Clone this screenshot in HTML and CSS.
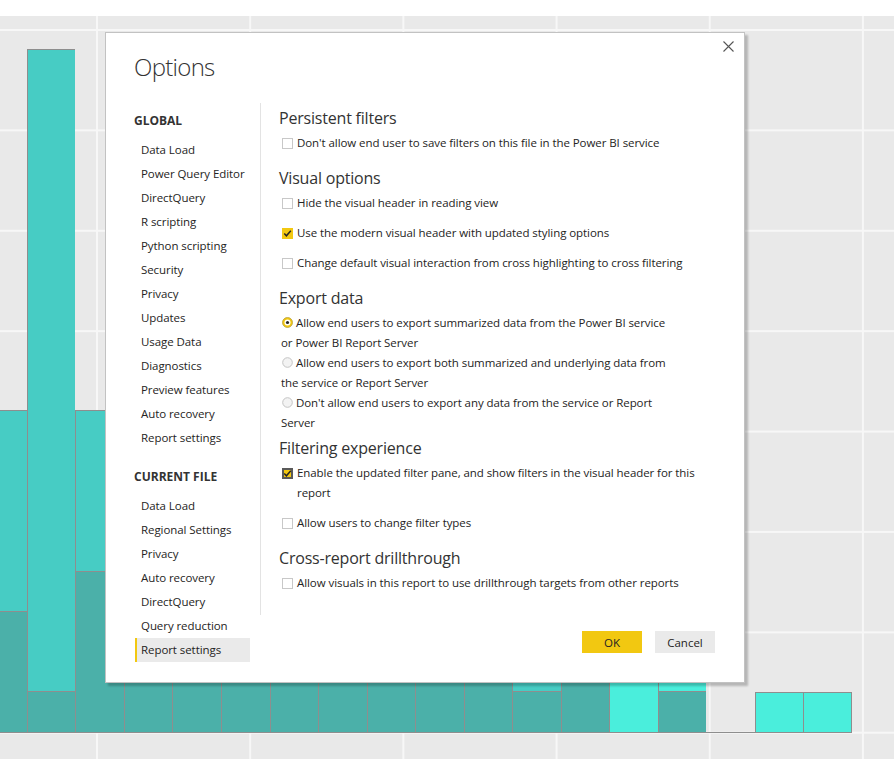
FILE: index.html
```html
<!DOCTYPE html>
<html>
<head>
<meta charset="utf-8">
<link rel="stylesheet" href="styles.css">
</head>
<body>
<div class="top"></div>
<div class="canvas">
  <div class="chart">
    <div class="bar"><div class="seg light" style="height:201px"></div><div class="seg dark" style="height:121px"></div></div>
    <div class="bar"><div class="seg light" style="height:642px"></div><div class="seg dark" style="height:41px"></div></div>
    <div class="bar"><div class="seg light" style="height:161px"></div><div class="seg dark" style="height:161px"></div></div>
    <div class="bar"><div class="seg light" style="height:120px"></div><div class="seg dark" style="height:180px"></div></div>
    <div class="bar"><div class="seg light" style="height:90px"></div><div class="seg dark" style="height:200px"></div></div>
    <div class="bar"><div class="seg light" style="height:110px"></div><div class="seg dark" style="height:170px"></div></div>
    <div class="bar"><div class="seg light" style="height:80px"></div><div class="seg dark" style="height:190px"></div></div>
    <div class="bar"><div class="seg light" style="height:100px"></div><div class="seg dark" style="height:160px"></div></div>
    <div class="bar"><div class="seg light" style="height:60px"></div><div class="seg dark" style="height:150px"></div></div>
    <div class="bar"><div class="seg light" style="height:70px"></div><div class="seg dark" style="height:140px"></div></div>
    <div class="bar"><div class="seg light" style="height:50px"></div><div class="seg dark" style="height:130px"></div></div>
    <div class="bar"><div class="seg light" style="height:100px"></div><div class="seg dark" style="height:41px"></div></div>
    <div class="bar"><div class="seg dark" style="height:150px"></div></div>
    <div class="bar"><div class="seg bright" style="height:140px"></div></div>
    <div class="bar"><div class="seg bright" style="height:60px"></div><div class="seg dark" style="height:41px"></div></div>
    <div class="bar"></div>
    <div class="bar"><div class="seg bright" style="height:40px"></div></div>
    <div class="bar"><div class="seg bright" style="height:40px"></div></div>
  </div>

  <div class="dialog">
    <button class="close" aria-label="Close">
      <svg width="11" height="11" viewBox="0 0 11 11"><path d="M0.5 0.5 L10.5 10.5 M10.5 0.5 L0.5 10.5" stroke="#555" stroke-width="1.1" fill="none"/></svg>
    </button>
    <h1 class="title">Options</h1>
    <div class="body">
      <nav class="nav">
        <div class="nav-head">GLOBAL</div>
        <ul class="nav-list">
          <li>Data Load</li>
          <li>Power Query Editor</li>
          <li>DirectQuery</li>
          <li>R scripting</li>
          <li>Python scripting</li>
          <li>Security</li>
          <li>Privacy</li>
          <li>Updates</li>
          <li>Usage Data</li>
          <li>Diagnostics</li>
          <li>Preview features</li>
          <li>Auto recovery</li>
          <li>Report settings</li>
        </ul>
        <div class="nav-head second">CURRENT FILE</div>
        <ul class="nav-list">
          <li>Data Load</li>
          <li>Regional Settings</li>
          <li>Privacy</li>
          <li>Auto recovery</li>
          <li>DirectQuery</li>
          <li>Query reduction</li>
          <li class="selected">Report settings</li>
        </ul>
      </nav>
      <div class="main">
        <div class="pane">
          <h2>Persistent filters</h2>
          <div class="check"><span class="box"></span><span class="label">Don't allow end user to save filters on this file in the Power BI service</span></div>

          <h2>Visual options</h2>
          <div class="check"><span class="box"></span><span class="label">Hide the visual header in reading view</span></div>
          <div class="check"><span class="box checked"><svg width="11" height="11" viewBox="0 0 11 11"><path d="M2.3 5.6 L4.4 7.8 L8.8 2.8" stroke="#252423" stroke-width="1.5" fill="none"/></svg></span><span class="label">Use the modern visual header with updated styling options</span></div>
          <div class="check"><span class="box"></span><span class="label">Change default visual interaction from cross highlighting to cross filtering</span></div>

          <h2>Export data</h2>
          <div class="radios">
            <p class="radio"><svg class="dot" width="11" height="11" viewBox="0 0 11 11"><circle cx="5.5" cy="5.5" r="5" fill="#f2c811" stroke="#b8a03a" stroke-width="0.8"/><circle cx="5.5" cy="5.5" r="3" fill="#fff"/><circle cx="5.5" cy="5.5" r="1.6" fill="#252423"/></svg>Allow end users to export summarized data from the Power BI service<br>or Power BI Report Server</p>
            <p class="radio"><svg class="dot" width="11" height="11" viewBox="0 0 11 11"><circle cx="5.5" cy="5.5" r="4.8" fill="#f3f3f3" stroke="#c3c3c3" stroke-width="1"/></svg>Allow end users to export both summarized and underlying data from<br>the service or Report Server</p>
            <p class="radio"><svg class="dot" width="11" height="11" viewBox="0 0 11 11"><circle cx="5.5" cy="5.5" r="4.8" fill="#f3f3f3" stroke="#c3c3c3" stroke-width="1"/></svg>Don't allow end users to export any data from the service or Report<br>Server</p>
          </div>

          <h2>Filtering experience</h2>
          <div class="check"><span class="box checked focus"><svg width="9" height="9" viewBox="1 1 9 9"><path d="M2.3 5.6 L4.4 7.8 L8.8 2.8" stroke="#252423" stroke-width="1.5" fill="none"/></svg></span><span class="label">Enable the updated filter pane, and show filters in the visual header for this<br>report</span></div>
          <div class="check"><span class="box"></span><span class="label">Allow users to change filter types</span></div>

          <h2>Cross-report drillthrough</h2>
          <div class="check"><span class="box"></span><span class="label">Allow visuals in this report to use drillthrough targets from other reports</span></div>
        </div>
        <div class="footer">
          <button class="btn ok">OK</button>
          <button class="btn cancel">Cancel</button>
        </div>
      </div>
    </div>
  </div>
</div>
</body>
</html>
```

FILE: styles.css
```css
* { box-sizing: border-box; }

html, body {
  margin: 0;
  padding: 0;
  width: 894px;
  height: 759px;
  overflow: hidden;
  font-family: "Segoe UI", "Open Sans", "Noto Sans", sans-serif;
  color: #252423;
}

.top {
  height: 16px;
  background: #ffffff;
}

.canvas {
  position: relative;
  height: 743px;
  background-color: #e9e9e9;
  background-image:
    linear-gradient(to right, #f7f7f7 0 2px, transparent 2px),
    linear-gradient(to bottom, #f7f7f7 0 2px, transparent 2px);
  background-size: 153.2px 100%, 100% 100.4px;
  background-position: 96px 0, 0 13px;
}

/* chart */
.chart {
  display: flex;
  align-items: flex-end;
  width: max-content;
  height: 717px;
  margin-left: -21.6px;
  border-bottom: 1px solid #8e8e8e;
}

.bar {
  width: 48.53px;
  display: flex;
  flex-direction: column;
}

.seg {
  border-top: 1px solid #8e8e8e;
  border-left: 1px solid #8e8e8e;
}

.bar:last-child .seg { border-right: 1px solid #8e8e8e; }

.seg.light { background: #47ccc4; }
.seg.dark { background: #4bb0a9; }
.seg.bright { background: #4aeedc; }

/* dialog */
.dialog {
  position: absolute;
  left: 105px;
  top: 16px;
  width: 640px;
  height: 651px;
  background: #ffffff;
  border: 1px solid #c2c2c2;
  box-shadow: 3px 3px 2px rgba(0, 0, 0, 0.22);
  padding: 18px 0 0 29px;
}

.close {
  position: absolute;
  top: 8px;
  right: 10px;
  width: 11px;
  height: 11px;
  padding: 0;
  border: 0;
  background: transparent;
  display: flex;
}

.title {
  margin: 0 0 0 -1px;
  font-size: 24px;
  letter-spacing: -0.7px;
  line-height: 32px;
  font-weight: 300;
  color: #333333;
}

.body {
  display: flex;
  margin-top: 20px;
}

.nav {
  width: 125px;
  flex: none;
  font-size: 11.5px;
  letter-spacing: -0.07px;
}

.nav-head {
  font-size: 12px;
  font-weight: 700;
  letter-spacing: 0;
  line-height: 24px;
  margin: 6px 0 5px -1px;
  color: #333333;
}

.nav-head.second { margin-top: 15px; }

.nav-list {
  list-style: none;
  margin: 0;
  padding: 0;
  width: 115px;
}

.nav-list li {
  line-height: 24px;
  padding-left: 6px;
  white-space: nowrap;
}

.nav-list li.selected {
  background: #eaeaea;
  border-left: 2px solid #f2c811;
  padding-left: 4px;
}

.main {
  flex: 1;
  display: flex;
  flex-direction: column;
}

.pane {
  display: flex;
  flex-direction: column;
  align-items: flex-start;
  border-left: 1px solid #e3e3e3;
  padding: 0 0 12px 20px;
  font-size: 11.5px;
  letter-spacing: -0.07px;
}

.pane h2 {
  margin: 3px 0 3px -2px;
  font-size: 16px;
  letter-spacing: -0.2px;
  line-height: 24px;
  font-weight: 400;
  color: #333333;
}

.check {
  display: flex;
  align-items: flex-start;
  gap: 4px;
  line-height: 20px;
  margin-bottom: 10px;
}

.box {
  flex: none;
  width: 11px;
  height: 11px;
  margin: 5px 0 0 1px;
  border: 1.5px solid #c8c8c8;
  background: #ffffff;
  display: flex;
  align-items: center;
  justify-content: center;
}

.box.checked {
  border: 0;
  background: #f2c811;
}

.box.checked.focus {
  border: 2px solid #5a5a5a;
}

.box svg { flex: none; }

.label { white-space: nowrap; }

.radios { margin: 0; }

.radio {
  margin: 0;
  line-height: 20px;
  white-space: nowrap;
}

.dot {
  vertical-align: -1px;
  margin: 0 3px 0 1px;
}

.footer {
  display: flex;
  justify-content: flex-end;
  gap: 13px;
  margin-top: 16px;
  padding-right: 29px;
}

.btn {
  width: 60px;
  height: 22px;
  border: 0;
  padding: 0;
  font-family: inherit;
  font-size: 11.5px;
  color: #252423;
}

.btn.ok { background: #f2c811; }
.btn.cancel { background: #eaeaea; }
```
